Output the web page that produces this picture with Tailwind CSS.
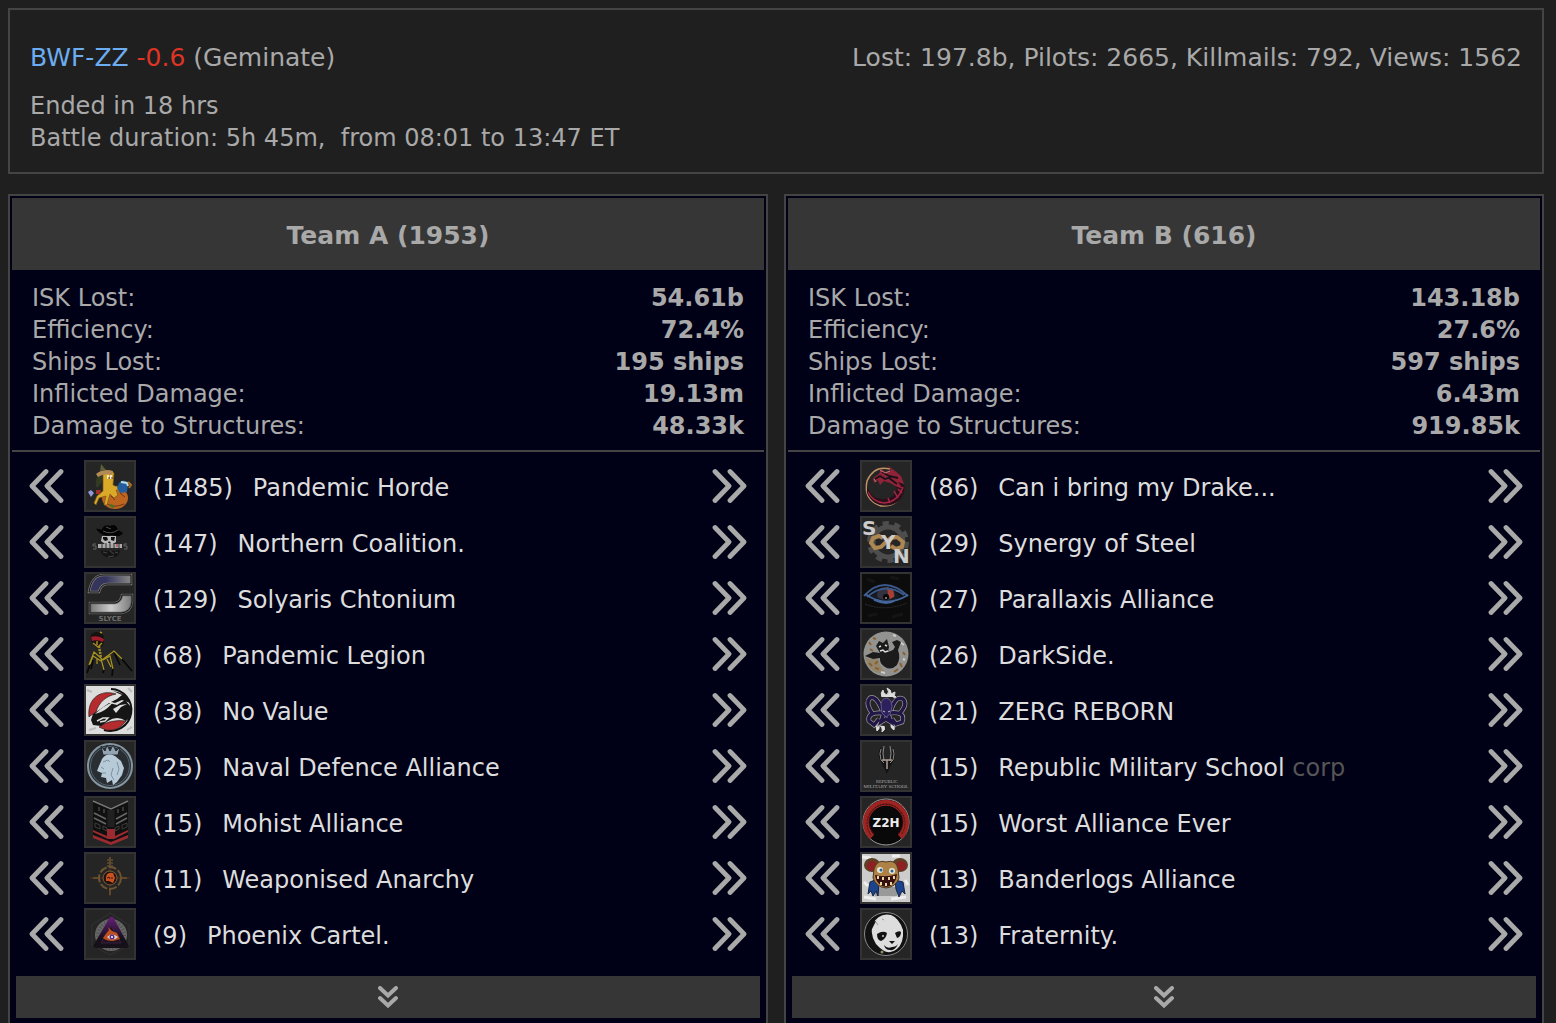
<!DOCTYPE html>
<html lang="en">

<head>
    <meta charset="utf-8">
    <title>BWF-ZZ (Geminate) - Battle Report</title>
    <script src="https://cdn.jsdelivr.net/npm/@tailwindcss/browser@4"></script>
</head>

<body class="bg-[#1f1f1f] text-[#a9a9a9] font-['Verdana','DejaVu_Sans',sans-serif] text-[24px] leading-8 pl-2 pr-3 pt-2">
    <!-- shared arrows -->
    <svg class="hidden">
        <symbol id="left" viewBox="0 0 36 36"><path d="M18 3.500 4 18 18 32.500M33 3.500 19 18 33 32.500" fill="none" stroke="#a9a9a9" stroke-width="4.800" stroke-linecap="round" stroke-linejoin="round"/></symbol>
        <symbol id="right" viewBox="0 0 36 36"><path d="M3 3.500 17 18 3 32.500M18 3.500 32 18 18 32.500" fill="none" stroke="#a9a9a9" stroke-width="4.800" stroke-linecap="round" stroke-linejoin="round"/></symbol>
        <symbol id="down" viewBox="0 0 20 22"><path d="M2 2 10 9.500 18 2M2 12 10 19.500 18 12" fill="none" stroke="#a9a9a9" stroke-width="4" stroke-linecap="round"/></symbol>
    </svg>

    <header class="border-2 border-[#444] px-5 pt-8 pb-[18px]">
        <div class="flex justify-between text-[25px] leading-8">
            <h1><a href="#" class="text-[#6cacf0]">BWF-ZZ</a> <span class="text-[#dd3426]">-0.6</span> (Geminate)</h1>
            <p>Lost: 197.8b, Pilots: 2665, Killmails: 792, Views: 1562</p>
        </div>
        <p class="mt-4">Ended in 18 hrs</p>
        <p>Battle duration: 5h 45m,&nbsp; from 08:01 to 13:47 ET</p>
    </header>

    <main class="mt-5 grid grid-cols-2 gap-4">
        <section class="border-2 border-[#444] bg-[#000017] p-0.5">
            <h2 class="bg-[#363636] text-center text-[25px] leading-8 font-bold pt-[22px] pb-[18px]">Team A (1953)</h2>
            <div class="border-b-2 border-[#444] px-5 pt-3 pb-2">
                <table class="w-full">
                    <tr><th class="text-left font-normal">ISK Lost:</th><td class="text-right font-bold">54.61b</td></tr>
                    <tr><th class="text-left font-normal">Efficiency:</th><td class="text-right font-bold">72.4%</td></tr>
                    <tr><th class="text-left font-normal">Ships Lost:</th><td class="text-right font-bold">195 ships</td></tr>
                    <tr><th class="text-left font-normal">Inflicted Damage:</th><td class="text-right font-bold">19.13m</td></tr>
                    <tr><th class="text-left font-normal">Damage to Structures:</th><td class="text-right font-bold">48.33k</td></tr>
                </table>
            </div>
            <ul class="px-4 pt-1.5 pb-3.5 text-[#ddd]">
                <li class="flex items-center h-14">
                    <button aria-label="Move left"><svg class="size-9"><use href="#left"/></svg></button>
                    <svg class="ml-5 mr-[17px] size-[52px] border-2 border-[#333] bg-[#252525]" viewBox="0 0 48 48">
                        <path d="M12 13Q8 22 11 26Q16 22 18 13Z" fill="#343b23"/>
                        <ellipse cx="29" cy="36" rx="13" ry="11" fill="#bd6520"/><path d="M20 41Q27 47 38 42M34 31l5 4M25 34l4 4" stroke="#743814" fill="none"/>
                        <path d="M17 12Q23 6 28 11L27 23Q32 26 36 22L39 24Q36 29 30 28L32 33 28 36 24 32 21 43 18 43 20 34 13 36 10 43 8 41 11 34 17 29Z" fill="#d9a927" stroke="#7b581b" stroke-width=".7"/>
                        <path d="M10 12Q17 6 27 9L26 13Q18 11 12 15Z" fill="#b28a55"/><path d="M14 9 15 2 20 8Z" fill="#59603a"/>
                        <path d="M33 21q4-5 9 0l-1 9-7 1-3-5z" fill="#245d9c"/><path d="m35 20 6 1 1 3" stroke="#b9dce7" stroke-width="2" fill="none"/><path d="m42 20 3 3-2 3" stroke="#a66c22" stroke-width="2" fill="none"/>
                        <path d="m10 28 5 0-1 4-4 0z" fill="#a23026"/><path d="M2 30l3-2 3 3-3 4z" fill="#9398db"/>
                        <path d="M22 13v4M25 13v4" stroke="#fff" stroke-width="1.500"/><path d="M23 15v2M26 15v2" stroke="#222" stroke-width=".8"/><path d="M24 43l4 2" stroke="#516e28" stroke-width="3"/>
                    </svg>
                    <span class="pt-1">(1485)</span><a href="#" class="ml-5 pt-1 grow">Pandemic Horde</a>
                    <button aria-label="Move right"><svg class="size-9"><use href="#right"/></svg></button>
                </li>
                <li class="flex items-center h-14">
                    <button aria-label="Move left"><svg class="size-9"><use href="#left"/></svg></button>
                    <svg class="ml-5 mr-[17px] size-[52px] border-2 border-[#333] bg-[#252525]" viewBox="0 0 48 48">
                        <path d="M16 18h14v6l-3 2h-8l-4-3z" fill="#b8b8b8"/><path d="M17 19h4l1 3-3 1-2-2zM25 19h4l-1 4-3-1zM23 23l-1 2h3z" fill="#111"/>
                        <path d="M15 14Q17 5 24 8Q30 5 32 12L37 15Q34 20 26 17Q17 20 10 11Q13 10 17 13Z" fill="#030303"/><path d="M17 13Q25 17 32 12M20 9l5 2" stroke="#505050" fill="none"/>
                        <path d="M12 26h24v4H12z" fill="#aaa"/><path d="M16 25v5M20 25v5M24 25v5M28 25v5M33 25v5" stroke="#333"/><path d="M31 26v3" stroke="#b22"/><path d="M10 26H7v2h3v3H7M41 26h-3v2h3v3h-3" stroke="#666" fill="none"/>
                        <path d="M14 32q9 2 20 0-1 8-9 8-8 0-11-8z" fill="#151515"/><path d="M17 34l4 1m3-2 4 3m-6 3 6-1m1-4 3 1" stroke="#484848"/>
                    </svg>
                    <span class="pt-1">(147)</span><a href="#" class="ml-5 pt-1 grow">Northern Coalition.</a>
                    <button aria-label="Move right"><svg class="size-9"><use href="#right"/></svg></button>
                </li>
                <li class="flex items-center h-14">
                    <button aria-label="Move left"><svg class="size-9"><use href="#left"/></svg></button>
                    <svg class="ml-5 mr-[17px] size-[52px] border-2 border-[#333] bg-[#252525]" viewBox="0 0 48 48">
                        <defs><linearGradient id="slyTop"><stop offset=".4" stop-color="#34345d"/><stop offset="1" stop-color="#888"/></linearGradient><linearGradient id="slyLow"><stop stop-color="#777"/><stop offset=".5" stop-color="#ccc"/><stop offset="1" stop-color="#777"/></linearGradient></defs>
                        <path d="M3 18C5 7 9 1 18 1H45V10H21Q15 10 13 18Z" fill="url(#slyTop)" stroke="#777" stroke-width="2.500"/><path d="M3 18C5 7 9 1 18 1H45V10H21Q15 10 13 18Z" fill="none" stroke="#171717"/>
                        <path d="M36 21H46V28Q45 38 35 39H4V29H29Q35 28 36 21Z" fill="url(#slyLow)" stroke="#666" stroke-width="2.500"/><path d="M36 21H46V28Q45 38 35 39H4V29H29Q35 28 36 21Z" fill="none" stroke="#171717"/>
                        <text x="24" y="47" text-anchor="middle" font-family="DejaVu Sans" font-weight="bold" font-size="7" fill="#6d6d6d">SLYCE</text>
                    </svg>
                    <span class="pt-1">(129)</span><a href="#" class="ml-5 pt-1 grow">Solyaris Chtonium</a>
                    <button aria-label="Move right"><svg class="size-9"><use href="#right"/></svg></button>
                </li>
                <li class="flex items-center h-14">
                    <button aria-label="Move left"><svg class="size-9"><use href="#left"/></svg></button>
                    <svg class="ml-5 mr-[17px] size-[52px] border-2 border-[#333] bg-[#252525]" viewBox="0 0 48 48">
                        <path d="M5 10Q3 3 10 2 18 2 18 9 18 17 13 18 8 17 5 10Z" fill="#15120f"/><path d="M5 7Q12 5 18 9L17 12Q11 9 6 11Z" fill="#a51b2d"/><path d="M7 13l5 4 4-4M11 11v4M14 2l2 1" stroke="#a68c23" stroke-width="1.500" fill="none"/>
                        <path d="M13 16 15 28" stroke="#a29023" stroke-width="2.500" stroke-dasharray="2 1"/>
                        <path d="M4 34 1 43M35 28 46 41M27 38 26 46M18 39 17 43M28 22 34 35M7 30 5 39" stroke="#080808" stroke-width="1.700" fill="none"/>
                        <path d="M15 31 7 26 4 34M16 29 8 22 3 35M16 30 28 21 36 29M17 30 24 26 27 39M15 29 18 40M11 28v6M21 29l4 8" stroke="#aa9421" stroke-width="1.200" fill="none"/>
                    </svg>
                    <span class="pt-1">(68)</span><a href="#" class="ml-5 pt-1 grow">Pandemic Legion</a>
                    <button aria-label="Move right"><svg class="size-9"><use href="#right"/></svg></button>
                </li>
                <li class="flex items-center h-14">
                    <button aria-label="Move left"><svg class="size-9"><use href="#left"/></svg></button>
                    <svg class="ml-5 mr-[17px] size-[52px] border-2 border-[#333] bg-[#ddd]" viewBox="0 0 48 48">
                        <path d="M1 4l5 2M3 44l7-2M42 2l4 4M41 44l5-3" stroke="#bbb" stroke-width="2"/>
                        <path d="M25 3A21 21 0 1 1 18 44" fill="none" stroke="#111" stroke-width="2"/>
                        <path d="M3 31C1 12 15 3 30 8 20 10 13 16 10 26L4 30Z" fill="#b62b2d" stroke="#222" stroke-width=".7"/>
                        <path d="M13 41Q24 33 40 35 32 46 20 44Z" fill="#b62b2d" stroke="#222" stroke-width=".7"/>
                        <path d="M27 5Q39 6 44 17L36 14 29 17 25 16Q31 14 36 9Z" fill="#151515"/>
                        <path d="M5 34 7 28 16 22 23 17 31 19 39 14 45 21 45 31 40 35Q31 29 22 35L15 40 7 39Z" fill="#151515"/>
                        <path d="M9 28Q17 20 27 16 22 23 15 26M27 23l7-4 7-1-6 3-5 6" fill="#ddd"/><path d="M11 35l6-3 5 0-3 3-5 1" fill="none" stroke="#ddd" stroke-width="1.400"/>
                    </svg>
                    <span class="pt-1">(38)</span><a href="#" class="ml-5 pt-1 grow">No Value</a>
                    <button aria-label="Move right"><svg class="size-9"><use href="#right"/></svg></button>
                </li>
                <li class="flex items-center h-14">
                    <button aria-label="Move left"><svg class="size-9"><use href="#left"/></svg></button>
                    <svg class="ml-5 mr-[17px] size-[52px] border-2 border-[#333] bg-[#252525]" viewBox="0 0 48 48">
                        <circle cx="24" cy="24" r="22" fill="#282d32" stroke="#8395a1" stroke-width="2"/><circle cx="24" cy="24" r="19.500" fill="#292e33" stroke="#566570"/>
                        <path d="M15 4l4 5 2-6 3 6 3-6 3 6 4-4-2 8H17z" fill="#92a4b2" stroke="#242a30"/>
                        <path d="M16 17Q21 10 29 14L35 19 38 26 36 33 31 40 27 43 26 38 21 41 20 36 15 35 16 31 11 29 13 24Z" fill="#b7cad7"/><path d="M17 20l5-2 2 2M15 25l3 2M16 31h4M27 26l-2 7 3 5M31 20l2 7-2 6" stroke="#71838f" stroke-width=".8" fill="none"/>
                    </svg>
                    <span class="pt-1">(25)</span><a href="#" class="ml-5 pt-1 grow">Naval Defence Alliance</a>
                    <button aria-label="Move right"><svg class="size-9"><use href="#right"/></svg></button>
                </li>
                <li class="flex items-center h-14">
                    <button aria-label="Move left"><svg class="size-9"><use href="#left"/></svg></button>
                    <svg class="ml-5 mr-[17px] size-[52px] border-2 border-[#333] bg-[#252525]" viewBox="0 0 48 48">
                        <path d="M7 2 25 10 42 2V38L25 46 7 38Z" fill="#101010"/><path d="M7 3 25 11 42 3" fill="none" stroke="#777" stroke-width="1.500"/>
                        <path d="M8 15 20 21M8 20 20 26M30 21 41 15M30 26 41 20" stroke="#666" stroke-width="1.500"/><path d="M9 25l5 2v4l-5-2zM17 28l4 2v3l-4-2zM41 25l-5 2v4l5-2zM33 28l-4 2v3l4-2z" stroke="#3c3c3c" fill="none"/>
                        <path d="M13 9v4M18 11v4M32 11v4M37 9v4" stroke="#454545" stroke-width="1.500"/><path d="M25 12V29" stroke="#202020" stroke-width="7"/>
                        <path d="M7 32 21 38V31H29V38L42 32V34L28 41H22L7 34ZM7 37 25 44 42 37V40L25 47 7 40Z" fill="#9c2b31"/>
                    </svg>
                    <span class="pt-1">(15)</span><a href="#" class="ml-5 pt-1 grow">Mohist Alliance</a>
                    <button aria-label="Move right"><svg class="size-9"><use href="#right"/></svg></button>
                </li>
                <li class="flex items-center h-14">
                    <button aria-label="Move left"><svg class="size-9"><use href="#left"/></svg></button>
                    <svg class="ml-5 mr-[17px] size-[52px] border-2 border-[#333] bg-[#252525]" viewBox="0 0 48 48">
                        <path d="M4 24H44M24 3V42" stroke="#5b3020"/><path d="M24 3V14M24 34V41M7 24H14M34 24H41" stroke="#60482b" stroke-width="2"/><path d="M22 5V14M26 5V14" stroke="#7b6038" stroke-dasharray="2 1"/>
                        <circle cx="24" cy="24" r="11" fill="none" stroke="#6c5431" stroke-width="2" stroke-dasharray="8 2"/><circle cx="24" cy="24" r="7" fill="#25120e" stroke="#7d6238"/>
                        <path d="M20 23Q21 18 27 19L29 24 27 29 23 27 20 27Z" fill="#c85221"/><path d="M21 24l2-1 1 2M26 23v2" stroke="#3b1610" fill="none"/>
                    </svg>
                    <span class="pt-1">(11)</span><a href="#" class="ml-5 pt-1 grow">Weaponised Anarchy</a>
                    <button aria-label="Move right"><svg class="size-9"><use href="#right"/></svg></button>
                </li>
                <li class="flex items-center h-14">
                    <button aria-label="Move left"><svg class="size-9"><use href="#left"/></svg></button>
                    <svg class="ml-5 mr-[17px] size-[52px] border-2 border-[#333] bg-[#252525]" viewBox="0 0 48 48">
                        <defs><linearGradient id="tri" x2="0" y2="1"><stop stop-color="#652078"/><stop offset=".7" stop-color="#15101a"/></linearGradient></defs>
                        <path d="M24 3 43 15V35L24 45 6 35V15Z" fill="none" stroke="#333"/><circle cx="25" cy="25" r="16" fill="#686868"/><circle cx="25" cy="25" r="13" fill="none" stroke="#505050" stroke-dasharray="1 2" stroke-width="4"/>
                        <path d="M24 7 27 7 43 36 41 38H9L7 36Z" fill="url(#tri)"/><path d="M25 16 35 33H15Z" fill="#23131f" stroke="#362040"/>
                        <path d="M19 25l4-5-1-3 4 4 5 2 3 6-7 2q-7 0-10-3z" fill="#be4f20"/><path d="M21 27Q26 22 32 27 26 32 21 27Z" fill="#ded3d3"/><circle cx="26" cy="27" r="2.500" fill="#552c83"/><circle cx="26" cy="27" r="1" fill="#fff"/>
                    </svg>
                    <span class="pt-1">(9)</span><a href="#" class="ml-5 pt-1 grow">Phoenix Cartel.</a>
                    <button aria-label="Move right"><svg class="size-9"><use href="#right"/></svg></button>
                </li>
            </ul>
            <div class="px-1 pb-3">
                <button aria-label="Show all Team A" class="flex w-full h-[42px] items-center justify-center bg-[#363636]"><svg class="w-5 h-[22px]"><use href="#down"/></svg></button>
            </div>
        </section>

        <section class="border-2 border-[#444] bg-[#000017] p-0.5">
            <h2 class="bg-[#363636] text-center text-[25px] leading-8 font-bold pt-[22px] pb-[18px]">Team B (616)</h2>
            <div class="border-b-2 border-[#444] px-5 pt-3 pb-2">
                <table class="w-full">
                    <tr><th class="text-left font-normal">ISK Lost:</th><td class="text-right font-bold">143.18b</td></tr>
                    <tr><th class="text-left font-normal">Efficiency:</th><td class="text-right font-bold">27.6%</td></tr>
                    <tr><th class="text-left font-normal">Ships Lost:</th><td class="text-right font-bold">597 ships</td></tr>
                    <tr><th class="text-left font-normal">Inflicted Damage:</th><td class="text-right font-bold">6.43m</td></tr>
                    <tr><th class="text-left font-normal">Damage to Structures:</th><td class="text-right font-bold">919.85k</td></tr>
                </table>
            </div>
            <ul class="px-4 pt-1.5 pb-3.5 text-[#ddd]">
                <li class="flex items-center h-14">
                    <button aria-label="Move left"><svg class="size-9"><use href="#left"/></svg></button>
                    <svg class="ml-5 mr-[17px] size-[52px] border-2 border-[#333] bg-[#252525]" viewBox="0 0 48 48">
                        <path d="M28 7Q12 3 5 19 1 38 19 44 38 45 42 25" fill="none" stroke="#c09066" stroke-width="1.500"/>
                        <path d="M5 25Q10 38 22 37 34 36 35 26L29 21 38 18 43 25Q42 39 29 43 12 46 5 31Z" fill="#2b101b"/><path d="M6 30q5 10 16 11 14-1 19-16M32 29l4 7M36 27l4 4M26 36l2 5" stroke="#a52743" stroke-width="1.500" fill="none"/>
                        <path d="M12 21 11 16 17 12 19 7 24 10 29 8 25 3 33 9 39 14 42 22 36 20 41 27 33 24 28 21 22 19 18 23 16 18Z" fill="#912338"/><path d="M13 17l5-3 5 3 6-2M20 10l7 4 9 2M27 16l8 6" stroke="#18111a" stroke-width="1.800" fill="none"/><path d="M12 17l2 3M18 8l5 3 5-2" stroke="#c3928a" stroke-width=".8" fill="none"/>
                    </svg>
                    <span class="pt-1">(86)</span><a href="#" class="ml-5 pt-1 grow">Can i bring my Drake...</a>
                    <button aria-label="Move right"><svg class="size-9"><use href="#right"/></svg></button>
                </li>
                <li class="flex items-center h-14">
                    <button aria-label="Move left"><svg class="size-9"><use href="#left"/></svg></button>
                    <svg class="ml-5 mr-[17px] size-[52px] border-2 border-[#333] bg-[#252525]" viewBox="0 0 48 48">
                        <circle cx="26" cy="24" r="18" fill="none" stroke="#4d4d4d" stroke-width="6" stroke-dasharray="6 5.300"/><circle cx="26" cy="24" r="15" fill="none" stroke="#4d4d4d" stroke-width="5"/>
                        <path d="M21 20l-4-2-6 2-2 5 4 5 6-1 4-4 6-5 6-1 6 5-1 5-6 2-5-3" fill="none" stroke="#ad8752" stroke-width="4"/>
                        <g font-family="DejaVu Sans" font-weight="bold" font-size="20" fill="#ccc"><text x="0" y="17">S</text><text x="19" y="31">Y</text><text x="31" y="45">N</text></g>
                    </svg>
                    <span class="pt-1">(29)</span><a href="#" class="ml-5 pt-1 grow">Synergy of Steel</a>
                    <button aria-label="Move right"><svg class="size-9"><use href="#right"/></svg></button>
                </li>
                <li class="flex items-center h-14">
                    <button aria-label="Move left"><svg class="size-9"><use href="#left"/></svg></button>
                    <svg class="ml-5 mr-[17px] size-[52px] border-2 border-[#333] bg-[#0c0c0c]" viewBox="0 0 48 48">
                        <path d="M5 5l8 3M28 3l9 2M6 42l9-2M30 43l11-3" stroke="#151515" stroke-width="3"/><path d="M3 30Q23 38 45 29" fill="none" stroke="#303030" stroke-dasharray="2 1"/>
                        <path d="M8 23Q22 8 39 22 25 33 8 23Z" fill="#161a22"/><path d="M15 23Q15 13 24 13 33 14 33 22 24 30 15 23Z" fill="#343240"/><path d="M25 13Q33 15 32 23L28 25 26 20Z" fill="#a54032"/><circle cx="24" cy="23" r="3" fill="#080808"/><circle cx="24" cy="24" r="1" fill="#999"/>
                        <path d="M2 22Q22 0 46 22M5 23Q23 7 42 21" fill="none" stroke="#3b5788" stroke-width="2"/><path d="M3 20 8 23Q26 33 46 21M12 26Q25 32 34 26" fill="none" stroke="#43659a" stroke-width="1.800"/>
                    </svg>
                    <span class="pt-1">(27)</span><a href="#" class="ml-5 pt-1 grow">Parallaxis Alliance</a>
                    <button aria-label="Move right"><svg class="size-9"><use href="#right"/></svg></button>
                </li>
                <li class="flex items-center h-14">
                    <button aria-label="Move left"><svg class="size-9"><use href="#left"/></svg></button>
                    <svg class="ml-5 mr-[17px] size-[52px] border-2 border-[#333] bg-[#252525]" viewBox="0 0 48 48">
                        <circle cx="24" cy="24" r="22.500" fill="#929290"/><path d="M3 27Q10 31 14 28L23 43Q8 45 3 27Z" fill="#91866c"/>
                        <path d="M7 12l2 3M11 8l3 1M7 33l3 3M13 38l4 1M38 33l2 4M41 22l2 3M16 31l-3 3M8 19l3 2M36 39l-4 3" stroke="#8c602d" stroke-width="2"/>
                        <path d="M38 12l4 3M31 5l3 1M41 29l2 1M19 42l4 1" stroke="#ccc" stroke-width="2"/>
                        <path d="M14 16l3-5 4 2 4-4 2 8-1 5 5-2 2-3-3-5 5-2 4 2-3 8q3 8-1 15-6 6-12 2-6-4-5-9l-7 1-8-3 8-4 7 1z" fill="#1b1b1b"/><path d="M17 17l2-1M23 15l2 1M18 21l3-1 2 2 3-1" stroke="#ddd" stroke-width="1.500" fill="none"/>
                    </svg>
                    <span class="pt-1">(26)</span><a href="#" class="ml-5 pt-1 grow">DarkSide.</a>
                    <button aria-label="Move right"><svg class="size-9"><use href="#right"/></svg></button>
                </li>
                <li class="flex items-center h-14">
                    <button aria-label="Move left"><svg class="size-9"><use href="#left"/></svg></button>
                    <svg class="ml-5 mr-[17px] size-[52px] border-2 border-[#333] bg-[#252525]" viewBox="0 0 48 48">
                        <path d="M20 11q-2-4 1-7 0 4 4 5 3-3 0-7 5 2 4 6l4-2q-2 4 2 6l-4-1M12 39q3 2 3 6 3-2 2-6 4 2 3 7 4-2 2-6M29 38q-1 4 3 6 1-3-1-6" fill="#ddd" stroke="#ddd"/>
                        <path d="M20 24Q14 9 8 12 3 17 10 27M29 24Q34 9 41 13 46 18 38 27M20 27Q5 26 7 35L12 39 17 33M28 27Q44 25 40 36L34 38 30 33M22 27 19 36 24 33 29 36 26 28" fill="none" stroke="#999" stroke-width="4.800"/>
                        <path d="M20 24Q14 9 8 12 3 17 10 27M29 24Q34 9 41 13 46 18 38 27M20 27Q5 26 7 35L12 39 17 33M28 27Q44 25 40 36L34 38 30 33M22 27 19 36 24 33 29 36 26 28" fill="none" stroke="#211646" stroke-width="3.400"/>
                        <path d="M19 18Q20 12 25 12 30 14 30 21L28 28 24 31 20 27Z" fill="#2e205c" stroke="#625888"/><path d="M21 25l2 1M28 25l-2 1" stroke="#bbb"/>
                    </svg>
                    <span class="pt-1">(21)</span><a href="#" class="ml-5 pt-1 grow">ZERG REBORN</a>
                    <button aria-label="Move right"><svg class="size-9"><use href="#right"/></svg></button>
                </li>
                <li class="flex items-center h-14">
                    <button aria-label="Move left"><svg class="size-9"><use href="#left"/></svg></button>
                    <svg class="ml-5 mr-[17px] size-[52px] border-2 border-[#333] bg-[#252525]" viewBox="0 0 48 48">
                        <path d="M19 5Q15 11 18 18L22 26 25 32 28 25 32 18Q34 11 31 5L29 18H21Z" fill="#141414"/><path d="M19 7Q17 11 19 18L22 21M22 4Q20 11 22 19M28 4Q30 11 28 19M31 7Q33 11 31 18L28 21" fill="none" stroke="#888"/><path d="M20 18h10M25 18v9" stroke="#b09a92" stroke-width="1.500"/>
                        <text x="25" y="41" text-anchor="middle" font-family="Liberation Serif" font-size="4.500" fill="#aaa">REPUBLIC</text><text x="24" y="46" text-anchor="middle" font-family="Liberation Serif" font-size="5" fill="#aaa">MILITARY SCHOOL</text>
                    </svg>
                    <span class="pt-1">(15)</span><a href="#" class="ml-5 pt-1 grow">Republic Military School <span class="text-[#555]">corp</span></a>
                    <button aria-label="Move right"><svg class="size-9"><use href="#right"/></svg></button>
                </li>
                <li class="flex items-center h-14">
                    <button aria-label="Move left"><svg class="size-9"><use href="#left"/></svg></button>
                    <svg class="ml-5 mr-[17px] size-[52px] border-2 border-[#333] bg-[#252525]" viewBox="0 0 48 48">
                        <circle cx="24" cy="24" r="23" fill="#090909" stroke="#999"/><path d="M10 39A20 20 0 1 1 38 39" fill="none" stroke="#9e2422" stroke-width="6"/><path d="M9 37A19 19 0 1 1 39 37M12 35A17 17 0 1 1 36 35" fill="none" stroke="#421314" stroke-dasharray="2 1"/>
                        <text x="24" y="29" text-anchor="middle" font-family="DejaVu Sans" font-weight="bold" font-size="12" fill="#eee">Z2H</text>
                    </svg>
                    <span class="pt-1">(15)</span><a href="#" class="ml-5 pt-1 grow">Worst Alliance Ever</a>
                    <button aria-label="Move right"><svg class="size-9"><use href="#right"/></svg></button>
                </li>
                <li class="flex items-center h-14">
                    <button aria-label="Move left"><svg class="size-9"><use href="#left"/></svg></button>
                    <svg class="ml-5 mr-[17px] size-[52px] border-2 border-[#333] bg-[#ccc]" viewBox="0 0 48 48">
                        <path d="M0 3l9 1M30 2l8 0M2 28l4 4M43 26l3 5M2 43l12 2M29 45l15-2" stroke="#eee" stroke-width="3"/><path d="M13 33h22v9H13z" fill="#999"/>
                        <ellipse cx="10" cy="11" rx="8" ry="7" fill="#5b4126"/><ellipse cx="10" cy="12" rx="5" ry="5" fill="#8e2023"/><ellipse cx="38" cy="11" rx="8" ry="7" fill="#5b4126"/><ellipse cx="39" cy="12" rx="5" ry="5" fill="#8e2023"/>
                        <path d="M13 26 8 28 6 40 9 37 11 42 14 37 16 42 17 29M33 26 41 28 43 40 40 37 37 43 34 35Z" fill="#1c438b" stroke="#142542"/>
                        <path d="M12 15Q15 5 24 8 34 5 36 15L37 24Q34 33 24 34 14 33 11 24Z" fill="#ae8247" stroke="#4e3821"/>
                        <circle cx="18" cy="16" r="3" fill="#e8e8d9"/><circle cx="30" cy="17" r="3" fill="#e8e8d9"/><circle cx="19" cy="16" r="1.500" fill="#236397"/><circle cx="30" cy="17" r="1.500" fill="#236397"/>
                        <path d="M13 21Q25 24 35 20 34 32 24 33 14 31 13 21Z" fill="#341011"/><path d="M16 22v3M21 23v3M27 23v3M32 22v3M19 31v-3M24 32v-3M29 31v-3" stroke="#e9d6a5" stroke-width="2"/>
                    </svg>
                    <span class="pt-1">(13)</span><a href="#" class="ml-5 pt-1 grow">Banderlogs Alliance</a>
                    <button aria-label="Move right"><svg class="size-9"><use href="#right"/></svg></button>
                </li>
                <li class="flex items-center h-14">
                    <button aria-label="Move left"><svg class="size-9"><use href="#left"/></svg></button>
                    <svg class="ml-5 mr-[17px] size-[52px] border-2 border-[#333] bg-[#252525]" viewBox="0 0 48 48">
                        <circle cx="24" cy="24" r="21.500" fill="#111" stroke="#888"/><path d="M10 15Q17 2 29 5 37 8 41 20 42 33 35 39 27 46 18 38 8 30 10 15Z" fill="#ddd"/>
                        <path d="M7 18q0-6 7-7l-4 8zM15 24q6-4 10-1-1 6-6 8-4-1-4-7zM33 23q4-3 6-1 0 5-4 6zM27 31h6l-3 3zM22 35q3 4 8 2 4 0 6-3-3 7-8 6-5 0-6-5z" fill="#111"/><circle cx="21" cy="26" r="1" fill="#ccc"/><path d="M14 12l2 3M20 9l2 1" stroke="#999"/><circle cx="20" cy="42" r="1.500" fill="#8e8d63"/>
                    </svg>
                    <span class="pt-1">(13)</span><a href="#" class="ml-5 pt-1 grow">Fraternity.</a>
                    <button aria-label="Move right"><svg class="size-9"><use href="#right"/></svg></button>
                </li>
            </ul>
            <div class="px-1 pb-3">
                <button aria-label="Show all Team B" class="flex w-full h-[42px] items-center justify-center bg-[#363636]"><svg class="w-5 h-[22px]"><use href="#down"/></svg></button>
            </div>
        </section>
    </main>
</body>

</html>
